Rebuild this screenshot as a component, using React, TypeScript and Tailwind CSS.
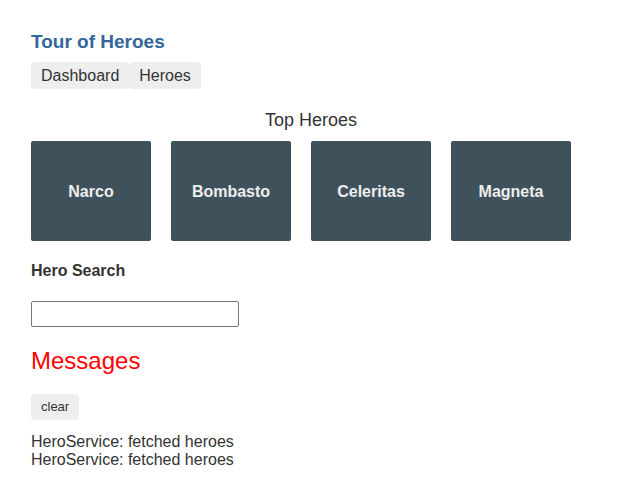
export default function App() {
  const heroes = ["Narco", "Bombasto", "Celeritas", "Magneta"];
  return (
    <div className="min-h-[498px] bg-white px-[31px] pt-[30px] text-[#333] [font-family:'Liberation_Sans',Arial,sans-serif]">
      <h1 className="text-[19px] font-bold leading-[24px] text-[#336699]">Tour of Heroes</h1>
      <nav className="mt-[8px] flex">
        <a className="rounded-[4px] bg-[#eee] px-[10px] py-[4px] text-[16px] leading-[19px] text-[#333]">Dashboard</a>
        <a className="rounded-[4px] bg-[#eee] px-[10px] py-[4px] text-[16px] leading-[19px] text-[#333]">Heroes</a>
      </nav>
      <h2 className="mt-[20px] text-center text-[18px] leading-[22px] text-[#333]">Top Heroes</h2>
      <div className="mt-[10px] flex gap-[20px]">
        {heroes.map((h) => (
          <div
            key={h}
            className="flex h-[100px] w-[120px] items-center justify-center rounded-[2px] bg-[#3f525c] pt-[2px] text-[16px] font-bold text-[#eee]"
          >
            {h}
          </div>
        ))}
      </div>
      <h4 className="mt-[21px] text-[16px] font-bold leading-[18px] text-[#333]">Hero Search</h4>
      <input className="mt-[21px] block h-[26px] w-[208px] rounded-[2px] border border-[#767676] bg-white" />
      <h2 className="mt-[20px] text-[24px] leading-[28px] text-[#ff0000]">Messages</h2>
      <button className="mt-[19px] block h-[26px] rounded-[4px] bg-[#eee] px-[10px] text-[13px] text-[#333]">clear</button>
      <div className="mt-[13px] text-[16px] leading-[18px] text-[#333]">
        <div>HeroService: fetched heroes</div>
        <div>HeroService: fetched heroes</div>
      </div>
    </div>
  );
}
